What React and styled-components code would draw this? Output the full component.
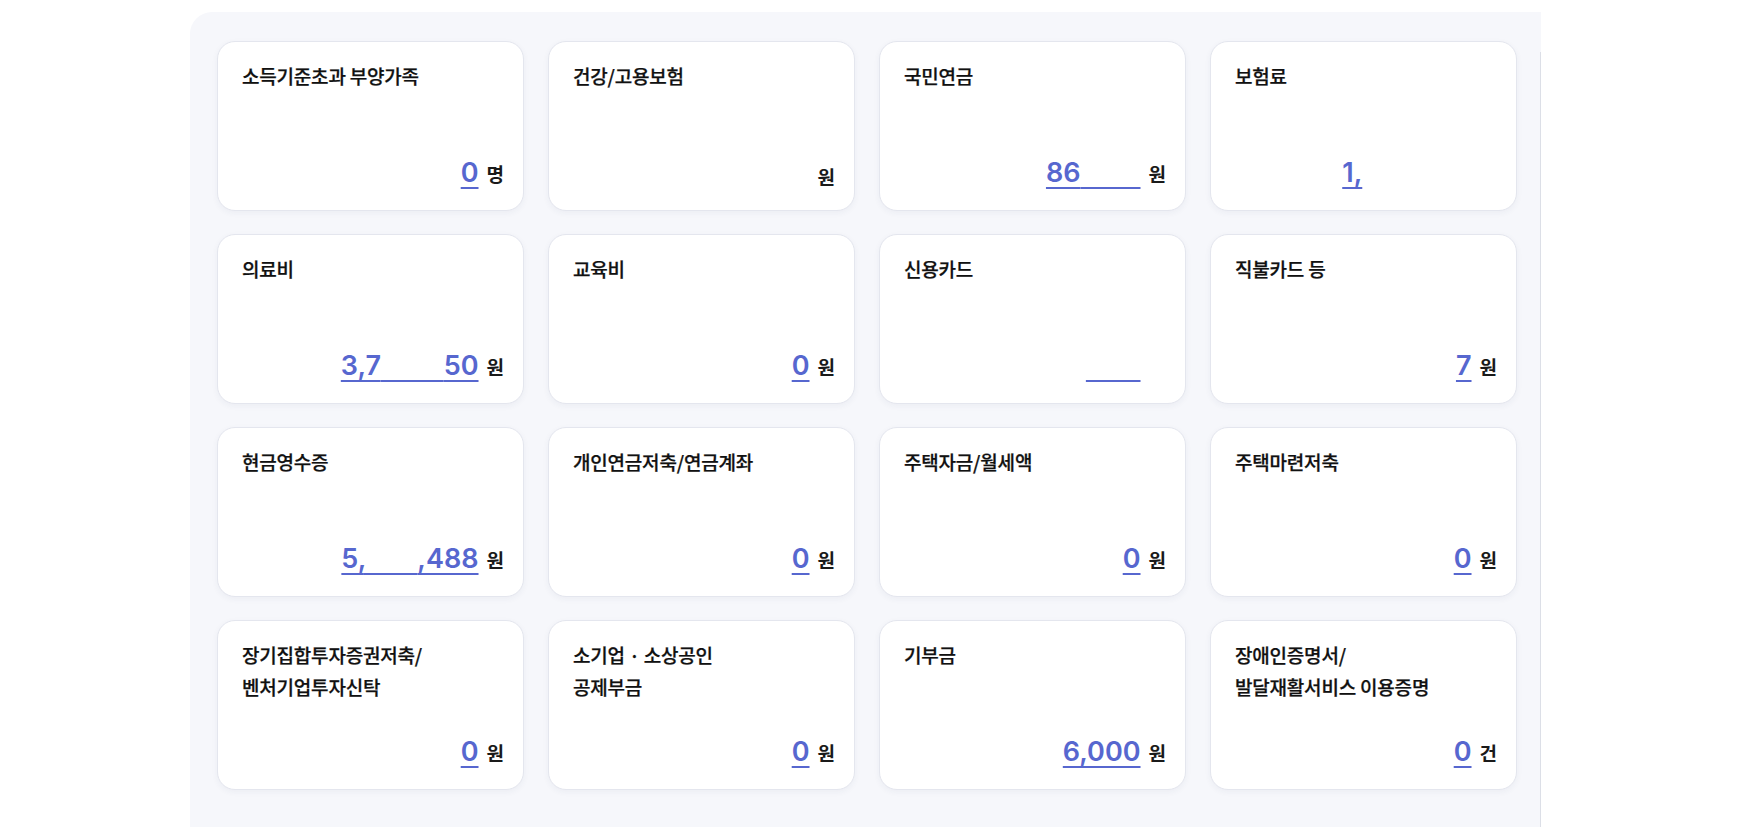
import React from 'react';
import styled, { createGlobalStyle } from 'styled-components';

const GlobalStyle = createGlobalStyle`
  html, body {
    margin: 0;
    padding: 0;
    background: #ffffff;
  }
  body {
    font-family: "Noto Sans CJK KR", "Noto Sans", sans-serif;
    color: #222;
  }
`;

const Page = styled.div`
  padding: 12px 0 0 190px;
  height: 827px;
  box-sizing: border-box;
  overflow: hidden;
`;

const Panel = styled.section`
  position: relative;
  width: 1351px;
  height: 815px;
  box-sizing: border-box;
  background: #f6f7fb;
  border-top-left-radius: 22px;
  padding: 29px 24px 0 27px;

  &::after {
    content: '';
    position: absolute;
    right: 0;
    top: 40px;
    bottom: 0;
    width: 1px;
    background: #dcdfe7;
  }
`;

const Grid = styled.div`
  display: grid;
  grid-template-columns: repeat(4, 1fr);
  grid-auto-rows: 170px;
  gap: 23px 24px;
`;

const Card = styled.div`
  display: flex;
  flex-direction: column;
  justify-content: space-between;
  background: #fff;
  border: 1px solid #e4e6ee;
  border-radius: 18px;
  box-shadow: 0 2px 6px rgba(40, 50, 90, 0.05);
  padding: 18px 19px 20px 24px;
  box-sizing: border-box;
`;

const Title = styled.div`
  font-size: 19px;
  font-weight: 500;
  line-height: 32px;
  color: #111;
  letter-spacing: -0.2px;
  white-space: pre-line;
  -webkit-text-stroke: 0.25px #111;
`;

const ValueRow = styled.div`
  display: flex;
  justify-content: flex-end;
  align-items: baseline;
  gap: 8px;
`;

const Amount = styled.span`
  font-family: Inter, "Noto Sans", sans-serif;
  font-size: 27px;
  font-weight: 600;
  line-height: 34px;
  color: #5767cf;
`;

const Seg = styled.span`
  color: ${(p) => (p.$hide ? 'transparent' : 'inherit')};
  text-decoration: ${(p) => (p.$line ? 'underline' : 'none')};
  text-decoration-color: #5767cf;
  text-decoration-thickness: 2px;
  text-underline-offset: 5px;
`;

const Unit = styled.span`
  font-size: 19px;
  font-weight: 600;
  color: ${(p) => (p.$hide ? 'transparent' : '#1a1a1a')};
`;

// segments: [text, hidden, underlined]
const items = [
  { title: '소득기준초과 부양가족', segs: [['0', false, true]], unit: '명' },
  { title: '건강/고용보험', segs: [], unit: '원' },
  { title: '국민연금', segs: [['86', false, true], ['9,00', true, true]], unit: '원' },
  { title: '보험료', segs: [['1,', false, true], ['234,567', true, false]], unit: '원', hideUnit: true },
  { title: '의료비', segs: [['3,7', false, true], ['37,2,', true, true], ['50', false, true]], unit: '원' },
  { title: '교육비', segs: [['0', false, true]], unit: '원' },
  { title: '신용카드', segs: [['1,234,56', true, false], ['7,89', true, true]], unit: '원', hideUnit: true },
  { title: '직불카드 등', segs: [['2,376,45', true, false], ['7', false, true]], unit: '원' },
  { title: '현금영수증', segs: [['5,', false, true], ['123,', true, true], [',488', false, true]], unit: '원' },
  { title: '개인연금저축/연금계좌', segs: [['0', false, true]], unit: '원' },
  { title: '주택자금/월세액', segs: [['0', false, true]], unit: '원' },
  { title: '주택마련저축', segs: [['0', false, true]], unit: '원' },
  { title: '장기집합투자증권저축/\n벤처기업투자신탁', segs: [['0', false, true]], unit: '원' },
  { title: '소기업 · 소상공인\n공제부금', segs: [['0', false, true]], unit: '원' },
  { title: '기부금', segs: [['6,000', false, true]], unit: '원' },
  { title: '장애인증명서/\n발달재활서비스 이용증명', segs: [['0', false, true]], unit: '건' },
];

const App = () => {
  return (
    <>
      <GlobalStyle />
      <Page>
        <Panel>
          <Grid>
            {items.map((it) => (
              <Card key={it.title}>
                <Title>{it.title}</Title>
                <ValueRow>
                  <Amount>
                    {it.segs.map(([t, hide, line], i) => (
                      <Seg key={i} $hide={hide} $line={line}>
                        {t}
                      </Seg>
                    ))}
                  </Amount>
                  <Unit $hide={it.hideUnit}>{it.unit}</Unit>
                </ValueRow>
              </Card>
            ))}
          </Grid>
        </Panel>
      </Page>
    </>
  );
};

export default App;
